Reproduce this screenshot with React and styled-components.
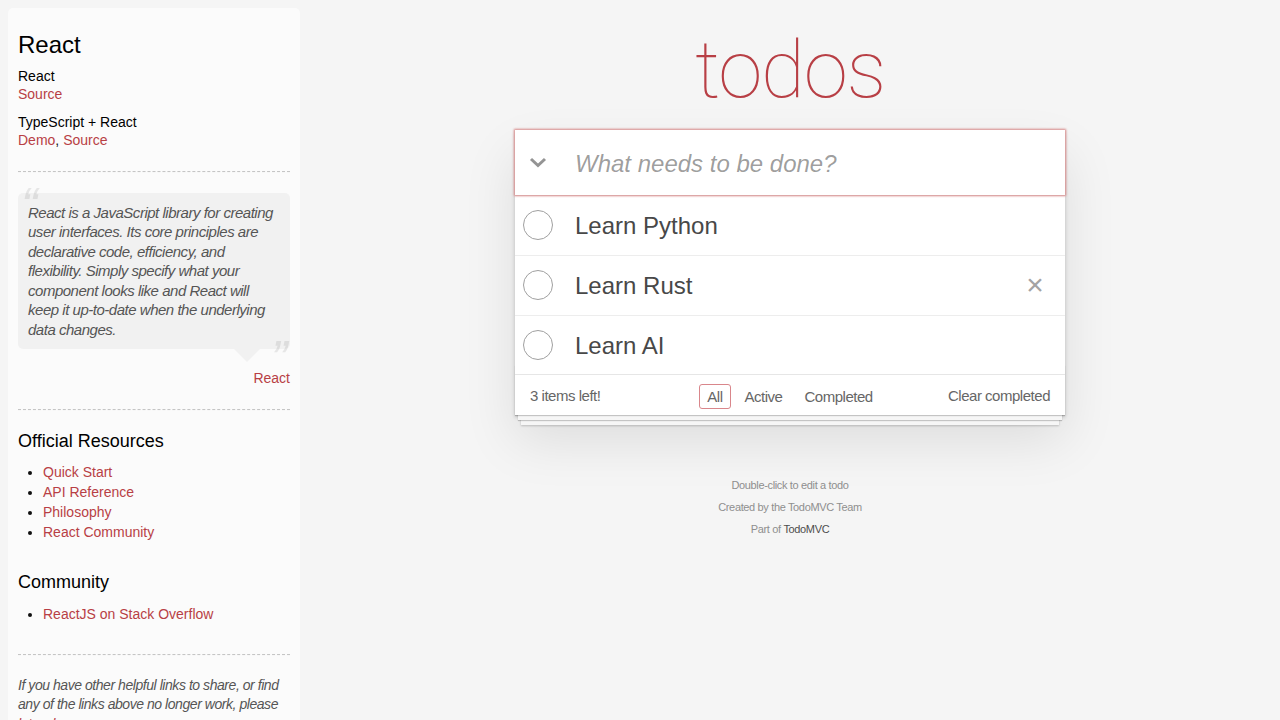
import React from 'react';
import styled, { createGlobalStyle } from 'styled-components';

const GlobalStyle = createGlobalStyle`
  html, body {
    margin: 0;
    padding: 0;
  }
  body {
    background: #f5f5f5;
    font-family: "Liberation Sans", Arial, sans-serif;
    font-weight: 300;
    font-size: 14px;
    line-height: 1.4em;
    color: #111111;
    overflow: hidden;
  }
`;

const Page = styled.div`
  display: flex;
  height: 100vh;
  overflow: hidden;
`;

const SidebarColumn = styled.div`
  flex: 0 0 300px;
  padding: 8px 0 0 8px;
  box-sizing: border-box;
`;

const Learn = styled.aside`
  width: 272px;
  padding: 10px;
  border-radius: 5px;
  background: rgba(255, 255, 255, 0.6);
`;

const LearnTitle = styled.h3`
  margin: 10px 0;
  padding-top: 4px;
  font-size: 24px;
  font-weight: 500;
  line-height: 25.8px;
  color: #000;
`;

const SourceName = styled.h5`
  margin: 10px 0 0;
  font-size: 14px;
  font-weight: 500;
  line-height: 1.2;
  color: #000;
`;

const LinkLine = styled.div`
  font-size: 14px;
  line-height: 19.6px;
`;

const Link = styled.a`
  color: #b83f45;
  font-weight: 400;
  text-decoration: none;
`;

const Divider = styled.hr`
  margin: 20px 0;
  height: 0;
  border: 0;
  border-top: 1px dashed #c5c5c5;
  border-bottom: 1px dashed #f7f7f7;
`;

const Quote = styled.blockquote`
  margin: 20px 0;
  padding: 0;
  border: none;
`;

const Bubble = styled.div`
  position: relative;
  padding: 10px;
  background: rgba(0, 0, 0, 0.04);
  border-radius: 5px;

  &::after {
    content: '';
    position: absolute;
    top: 100%;
    right: 30px;
    border: 13px solid transparent;
    border-top-color: rgba(0, 0, 0, 0.04);
  }
`;

const QuoteText = styled.p`
  margin: 0;
  font-size: 15px;
  font-style: italic;
  line-height: 1.3;
  color: #555;
  letter-spacing: -0.032em;

  &::before {
    content: '\\201C';
    position: absolute;
    top: -19px;
    left: 3px;
    font-size: 50px;
    opacity: 0.12;
  }

  &::after {
    content: '\\201D';
    position: absolute;
    bottom: -43px;
    right: 3px;
    font-size: 50px;
    opacity: 0.12;
  }
`;

const QuoteFooter = styled.footer`
  margin-top: 20px;
  text-align: right;
  font-size: 14px;
  line-height: 19.6px;
`;

const SectionTitle = styled.h4`
  margin: 10px 0;
  font-size: 18px;
  font-weight: 500;
  line-height: 1.2;
  color: #000;
`;

const LinkList = styled.ul`
  padding: 0;
  margin: 0 0 30px 25px;
`;

const LinkItem = styled.li`
  line-height: 20px;
  font-size: 14px;
`;

const LearnNote = styled.em`
  display: block;
  font-size: 14px;
  line-height: 19.6px;
  color: #555;
  letter-spacing: -0.032em;
`;

const MainColumn = styled.main`
  flex: 1;
  display: flex;
  flex-direction: column;
  align-items: center;
`;

const Title = styled.h1`
  margin: 30px 0 20px;
  font-family: Roboto, "Liberation Sans", sans-serif;
  font-weight: 100;
  font-size: 80px;
  line-height: 80px;
  letter-spacing: -1.2px;
  color: #b83f45;
  text-align: center;
`;

const TodoApp = styled.section`
  position: relative;
  width: 550px;
  background: #fff;
  box-shadow: 0 2px 4px 0 rgba(0, 0, 0, 0.2), 0 25px 50px 0 rgba(0, 0, 0, 0.1);
`;

const NewTodoBar = styled.div`
  position: relative;
  z-index: 3;
  display: flex;
  align-items: center;
  height: 65px;
  box-shadow: ${(p) =>
    p.$focused
      ? '0 0 2px 1px #d98a8a'
      : 'inset 0 -2px 1px rgba(0, 0, 0, 0.03)'};
`;

const ToggleAllButton = styled.button`
  flex: 0 0 45px;
  height: 65px;
  display: flex;
  align-items: center;
  justify-content: center;
  padding: 0;
  border: none;
  background: none;
`;

const NewTodoInput = styled.input`
  flex: 1;
  height: 65px;
  box-sizing: border-box;
  border: none;
  padding: 17px 16px 15px 15px;
  font-family: inherit;
  font-size: 24px;
  font-weight: 400;
  line-height: 1.4em;
  color: #484848;
  background: transparent;
  outline: none;

  &::placeholder {
    font-style: italic;
    color: rgba(0, 0, 0, 0.4);
  }
`;

const TodoList = styled.ul`
  margin: 0;
  padding: 0;
  list-style: none;
  border-top: 1px solid #e6e6e6;
`;

const TodoRow = styled.li`
  display: flex;
  align-items: center;
  font-size: 24px;
  border-bottom: 1px solid #ededed;

  &:last-child {
    border-bottom: none;
  }
`;

const Toggle = styled.span`
  flex: 0 0 30px;
  height: 30px;
  box-sizing: border-box;
  margin-left: 8px;
  border-radius: 50%;
  border: 1px solid #a0a0a0;
`;

const TodoLabel = styled.label`
  flex: 1;
  padding: 16px 15px 14px 22px;
  line-height: 1.2;
  color: #484848;
  font-weight: 400;
`;

const DestroyButton = styled.button`
  flex: 0 0 40px;
  height: 40px;
  margin-right: 10px;
  padding: 0 0 2px;
  border: none;
  background: none;
  font-family: inherit;
  font-size: 30px;
  font-weight: 300;
  line-height: 1.1;
  color: #a3a3a3;
  visibility: ${(p) => (p.$visible ? 'visible' : 'hidden')};
`;

const TodoFooter = styled.footer`
  position: relative;
  display: grid;
  grid-template-columns: 1fr auto 1fr;
  grid-template-rows: 20px;
  align-items: center;
  height: 20px;
  padding: 10px 15px;
  border-top: 1px solid #e6e6e6;
  font-size: 15px;
  line-height: 19.6px;
  color: #666;
  letter-spacing: -0.032em;

  &::before {
    content: '';
    position: absolute;
    right: 0;
    bottom: 0;
    left: 0;
    height: 50px;
    overflow: hidden;
    pointer-events: none;
    box-shadow: 0 1px 1px rgba(0, 0, 0, 0.2), 0 8px 0 -3px #f6f6f6,
      0 9px 1px -3px rgba(0, 0, 0, 0.2), 0 16px 0 -6px #f6f6f6,
      0 17px 2px -6px rgba(0, 0, 0, 0.2);
  }
`;

const TodoCount = styled.span`
  justify-self: start;
`;

const Filters = styled.ul`
  display: flex;
  align-items: center;
  margin: 2px 0 0;
  padding: 0;
  list-style: none;
`;

const FilterLink = styled.a`
  display: block;
  margin: 3px;
  padding: 3px 7px;
  line-height: 17px;
  border: 1px solid ${(p) => (p.$selected ? '#d9868b' : 'transparent')};
  border-radius: 3px;
  color: inherit;
  text-decoration: none;
`;

const ClearButton = styled.button`
  justify-self: end;
  padding: 0;
  border: none;
  background: none;
  font: inherit;
  letter-spacing: inherit;
  line-height: 19.6px;
  color: inherit;
`;

const Info = styled.footer`
  margin-top: 65px;
  font-size: 11px;
  color: #8f8f8f;
  text-align: center;
  letter-spacing: -0.032em;
`;

const InfoLine = styled.p`
  margin: 0 0 11px;
  line-height: 1;
`;

const InfoLink = styled.a`
  color: #4d4d4d;
  font-weight: 400;
  text-decoration: none;
`;

const Chevron = () => (
  <svg width="18" height="11" viewBox="0 0 18 11" aria-hidden="true">
    <polyline
      points="2,2 9,8.5 16,2"
      fill="none"
      stroke="#949494"
      strokeWidth="3"
    />
  </svg>
);

const todos = [
  { id: 1, title: 'Learn Python' },
  { id: 2, title: 'Learn Rust', hovered: true },
  { id: 3, title: 'Learn AI' },
];

const officialLinks = ['Quick Start', 'API Reference', 'Philosophy', 'React Community'];

export default function App() {
  return (
    <>
      <GlobalStyle />
      <Page>
        <SidebarColumn>
          <Learn>
            <header>
              <LearnTitle>React</LearnTitle>
              <SourceName>React</SourceName>
              <LinkLine>
                <Link href="#">Source</Link>
              </LinkLine>
              <SourceName>TypeScript + React</SourceName>
              <LinkLine>
                <Link href="#">Demo</Link>, <Link href="#">Source</Link>
              </LinkLine>
            </header>
            <Divider />
            <Quote>
              <Bubble>
                <QuoteText>
                  React is a JavaScript library for creating
                  <br />
                  user interfaces. Its core principles are
                  <br />
                  declarative code, efficiency, and
                  <br />
                  flexibility. Simply specify what your
                  <br />
                  component looks like and React will
                  <br />
                  keep it up-to-date when the underlying
                  <br />
                  data changes.
                </QuoteText>
              </Bubble>
              <QuoteFooter>
                <Link href="#">React</Link>
              </QuoteFooter>
            </Quote>
            <Divider />
            <SectionTitle>Official Resources</SectionTitle>
            <LinkList>
              {officialLinks.map((l) => (
                <LinkItem key={l}>
                  <Link href="#">{l}</Link>
                </LinkItem>
              ))}
            </LinkList>
            <SectionTitle>Community</SectionTitle>
            <LinkList>
              <LinkItem>
                <Link href="#">ReactJS on Stack Overflow</Link>
              </LinkItem>
            </LinkList>
            <footer>
              <Divider />
              <LearnNote>
                If you have other helpful links to share, or find
                <br />
                any of the links above no longer work, please
                <br />
                <Link href="#">let us know</Link>.
              </LearnNote>
            </footer>
          </Learn>
        </SidebarColumn>
        <MainColumn>
          <Title>todos</Title>
          <TodoApp>
            <NewTodoBar $focused>
              <ToggleAllButton aria-label="Mark all as complete">
                <Chevron />
              </ToggleAllButton>
              <NewTodoInput placeholder="What needs to be done?" />
            </NewTodoBar>
            <TodoList>
              {todos.map((t) => (
                <TodoRow key={t.id}>
                  <Toggle />
                  <TodoLabel>{t.title}</TodoLabel>
                  <DestroyButton $visible={t.hovered}>×</DestroyButton>
                </TodoRow>
              ))}
            </TodoList>
            <TodoFooter>
              <TodoCount>3 items left!</TodoCount>
              <Filters>
                <li>
                  <FilterLink href="#/" $selected>
                    All
                  </FilterLink>
                </li>
                <li>
                  <FilterLink href="#/active">Active</FilterLink>
                </li>
                <li>
                  <FilterLink href="#/completed">Completed</FilterLink>
                </li>
              </Filters>
              <ClearButton>Clear completed</ClearButton>
            </TodoFooter>
          </TodoApp>
          <Info>
            <InfoLine>Double-click to edit a todo</InfoLine>
            <InfoLine>Created by the TodoMVC Team</InfoLine>
            <InfoLine>
              Part of <InfoLink href="#">TodoMVC</InfoLink>
            </InfoLine>
          </Info>
        </MainColumn>
      </Page>
    </>
  );
}
